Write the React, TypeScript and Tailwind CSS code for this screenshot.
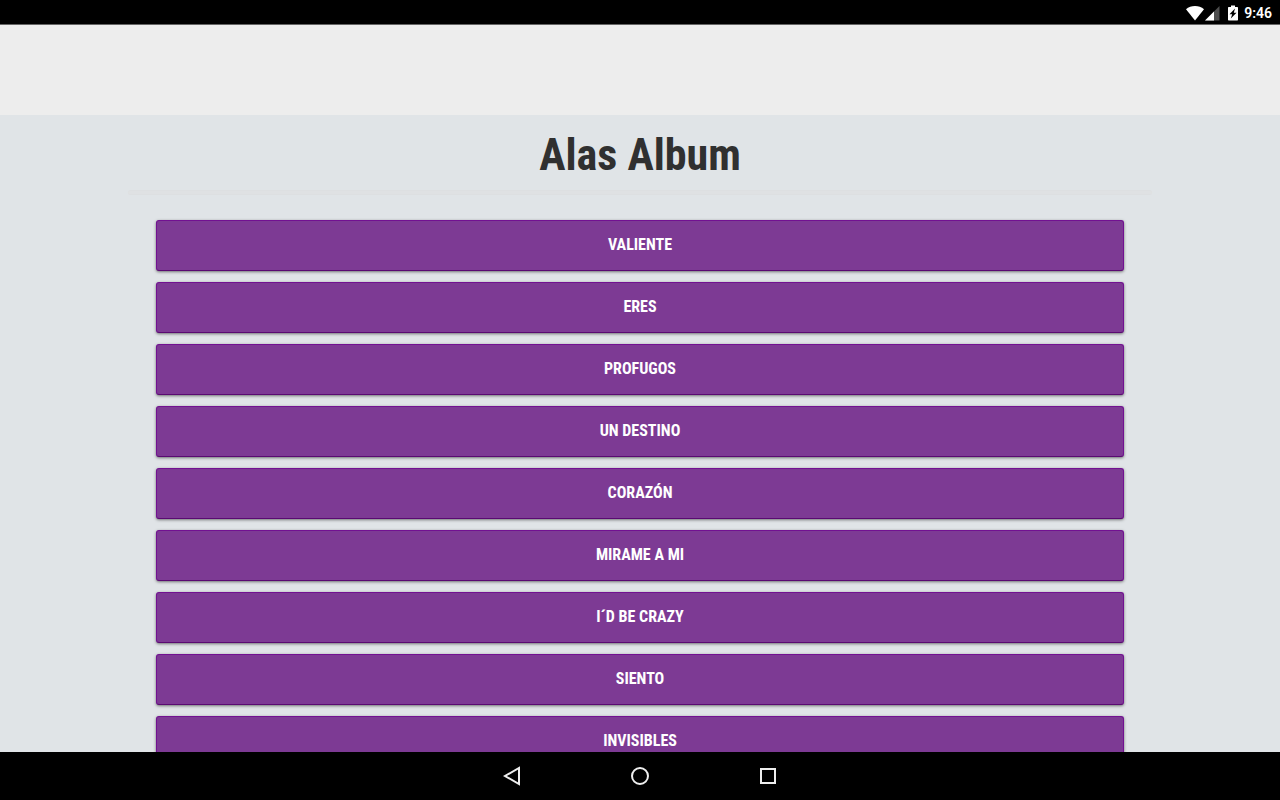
// src/App.tsx
const songs = [
  "Valiente",
  "Eres",
  "Profugos",
  "Un destino",
  "Corazón",
  "Mirame a mi",
  "I´d be crazy",
  "Siento",
  "Invisibles",
];

function StatusBar() {
  return (
    <div className="flex h-[25px] shrink-0 items-center justify-end border-b border-[#666] bg-black pt-px pr-2 text-white">
      {/* wifi */}
      <svg className="h-4 w-[18px]" viewBox="0 0 18 16" fill="currentColor" aria-hidden="true">
        <path d="M9 15.500 0 4.200C2.500 2.200 5.600 1 9 1s6.500 1.200 9 3.200z" />
      </svg>
      {/* signal */}
      <svg className="ml-px h-4 w-[15px]" viewBox="0 0 15 16" fill="currentColor" aria-hidden="true">
        <path d="M0 15.500 14.500 1v14.500z" opacity="0.3" />
        <path d="M0 15.500 9 6.500v9z" />
      </svg>
      {/* battery */}
      <svg className="ml-2 h-4 w-[10px]" viewBox="0 0 10 16" aria-hidden="true">
        <path d="M3 0.500h4V2h2.300q.7 0 .7.700v12.100q0 .7-.7.700H.7q-.7 0-.7-.7V2.700Q0 2 .7 2H3z" fill="white" />
        <path d="M7 3.500 1.500 9.200H4.200L2.800 13.500 8.500 7.800H5.800z" fill="black" />
      </svg>
      <span className="ml-[6px] text-sm font-semibold">9:46</span>
    </div>
  );
}

function NavBar() {
  return (
    <nav className="flex h-12 shrink-0 items-center justify-center gap-[104px] bg-black text-[#eee]">
      <button type="button" aria-label="Back">
        <svg className="size-6" viewBox="0 0 24 24" fill="none" stroke="currentColor" strokeWidth="2">
          <path d="M19 4v16L5 12z" />
        </svg>
      </button>
      <button type="button" aria-label="Home">
        <svg className="size-6" viewBox="0 0 24 24" fill="none" stroke="currentColor" strokeWidth="2">
          <circle cx="12" cy="12" r="8" />
        </svg>
      </button>
      <button type="button" aria-label="Recent apps">
        <svg className="size-6" viewBox="0 0 24 24" fill="none" stroke="currentColor" strokeWidth="2">
          <path d="M5 5h14v14H5z" />
        </svg>
      </button>
    </nav>
  );
}

export default function App() {
  return (
    <div className="flex h-screen flex-col font-['Roboto',sans-serif]">
      <StatusBar />
      <header className="h-[90px] shrink-0 bg-[#ededed]" />

      <main className="min-h-0 flex-1 overflow-hidden bg-[#e0e4e7] font-['Roboto_Condensed','Roboto',sans-serif]">
        <div className="mx-auto w-4/5">
          <h1 className="pt-3 text-center text-[44px] leading-[56px] font-bold text-[#303030]">
            Alas Album
          </h1>
          <hr className="mt-[7px] h-[5px] rounded-sm border-y border-[#dddfe1] bg-[#dfe1e3]" />

          <ul className="mt-[25px] space-y-[11px] px-7">
            {songs.map((song) => (
              <li key={song}>
                <button
                  type="button"
                  className="block h-[51px] w-full rounded-[3px] border border-t-[#721191] border-r-[#721191] border-b-[#5a0a72] border-l-[#721191] bg-[#7d3a94] pb-[2px] text-base font-bold text-white uppercase shadow-[0_1px_3px_rgba(0,0,0,0.5)]"
                >
                  {song}
                </button>
              </li>
            ))}
          </ul>
        </div>
      </main>

      <NavBar />
    </div>
  );
}
